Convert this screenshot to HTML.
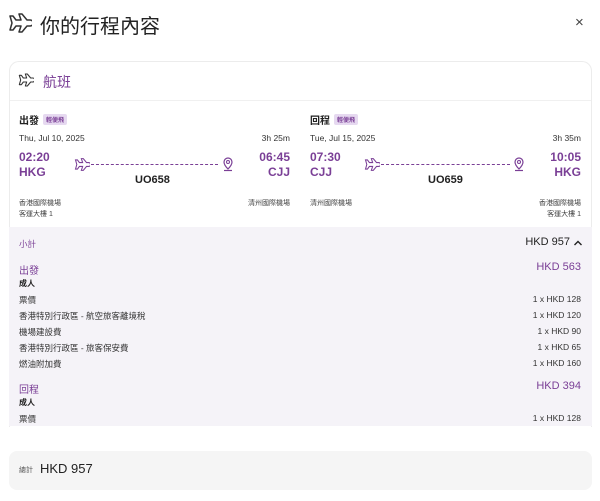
<!DOCTYPE html>
<html><head><meta charset="utf-8">
<style>
*{margin:0;padding:0;box-sizing:border-box}
body{width:600px;height:501px;background:#fff;font-family:"Liberation Sans","Noto Sans CJK TC",sans-serif;color:#222;position:relative;overflow:hidden}
.a{position:absolute;white-space:nowrap}
.p{color:#7a3f96}
.s{font-size:8.5px;color:#333}
.r{text-align:right}
.tag{display:inline-block;background:#e6d9f0;color:#7a3f96;font-size:6px;padding:1px 3px;border-radius:2px;vertical-align:2px;margin-left:4px;font-weight:bold}
.big{font-size:12px;font-weight:bold;color:#7a3f96;line-height:15px}
.dash{position:absolute;border-top:1px dashed #7a3f96;height:0}
</style></head><body>
<svg class="a" style="left:8px;top:13px" width="24" height="20" viewBox="0 0 24 20"><path d="M2 3l3 0 3 4h5l-2-6h3l5 6h3c2 0 3 1.5 3 3s-1 3-3 3h-3l-5 6h-3l2-6h-5l-3 4h-3l2-7z" fill="none" stroke="#333" stroke-width="1.5" stroke-linejoin="round"/></svg>
<div class="a" style="left:40px;top:10px;font-size:20px;color:#222">你的行程內容</div>
<div class="a" style="left:575px;top:14px;font-size:15px;color:#444">×</div>

<div class="a" style="left:9px;top:61px;width:583px;height:366px;border:1px solid #ececec;border-bottom:none;border-radius:10px 10px 0 0"></div>
<svg class="a" style="left:18px;top:73px" width="16" height="14" viewBox="0 0 24 20"><path d="M2 3l3 0 3 4h5l-2-6h3l5 6h3c2 0 3 1.5 3 3s-1 3-3 3h-3l-5 6h-3l2-6h-5l-3 4h-3l2-7z" fill="none" stroke="#333" stroke-width="1.6" stroke-linejoin="round"/></svg>
<div class="a p" style="left:43px;top:72px;font-size:14px">航班</div>
<div class="a" style="left:10px;top:100px;width:581px;border-top:1px solid #f0f0f0"></div>

<div class="a" style="left:19px;top:112px;font-size:10px;font-weight:bold">出發<span class="tag">輕便飛</span></div>
<div class="a s" style="left:19px;top:133px">Thu, Jul 10, 2025</div>
<div class="a s r" style="left:200px;width:90px;top:133px">3h 25m</div>
<div class="a big" style="left:19px;top:150px">02:20<br>HKG</div>
<div class="a big r" style="left:230px;width:60px;top:150px">06:45<br>CJJ</div>
<svg class="a" style="left:74px;top:158px" width="16" height="13" viewBox="0 0 24 20"><path d="M2 3l3 0 3 4h5l-2-6h3l5 6h3c2 0 3 1.5 3 3s-1 3-3 3h-3l-5 6h-3l2-6h-5l-3 4h-3l2-7z" fill="none" stroke="#7a3f96" stroke-width="1.6"/></svg>
<div class="dash" style="left:91px;top:164px;width:127px"></div>
<svg class="a" style="left:222px;top:157px" width="12" height="15" viewBox="0 0 12 15"><path d="M6 12C3 9 2 7 2 5a4 4 0 0 1 8 0c0 2-1 4-4 7z" fill="none" stroke="#7a3f96" stroke-width="1.2"/><circle cx="6" cy="5" r="1.5" fill="none" stroke="#7a3f96" stroke-width="1"/><path d="M2 13.5h8" stroke="#7a3f96" stroke-width="1.2"/></svg>
<div class="a" style="left:135px;top:174px;font-size:11px;font-weight:bold">UO658</div>
<div class="a" style="left:19px;top:198px;font-size:7px;color:#444;line-height:11px">香港國際機場<br>客運大樓 1</div>
<div class="a r" style="left:200px;width:90px;top:198px;font-size:7px;color:#444">清州國際機場</div>

<div class="a" style="left:310px;top:112px;font-size:10px;font-weight:bold">回程<span class="tag">輕便飛</span></div>
<div class="a s" style="left:310px;top:133px">Tue, Jul 15, 2025</div>
<div class="a s r" style="left:490px;width:91px;top:133px">3h 35m</div>
<div class="a big" style="left:310px;top:150px">07:30<br>CJJ</div>
<div class="a big r" style="left:520px;width:61px;top:150px">10:05<br>HKG</div>
<svg class="a" style="left:364px;top:158px" width="16" height="13" viewBox="0 0 24 20"><path d="M2 3l3 0 3 4h5l-2-6h3l5 6h3c2 0 3 1.5 3 3s-1 3-3 3h-3l-5 6h-3l2-6h-5l-3 4h-3l2-7z" fill="none" stroke="#7a3f96" stroke-width="1.6"/></svg>
<div class="dash" style="left:381px;top:164px;width:129px"></div>
<svg class="a" style="left:513px;top:157px" width="12" height="15" viewBox="0 0 12 15"><path d="M6 12C3 9 2 7 2 5a4 4 0 0 1 8 0c0 2-1 4-4 7z" fill="none" stroke="#7a3f96" stroke-width="1.2"/><circle cx="6" cy="5" r="1.5" fill="none" stroke="#7a3f96" stroke-width="1"/><path d="M2 13.5h8" stroke="#7a3f96" stroke-width="1.2"/></svg>
<div class="a" style="left:428px;top:174px;font-size:11px;font-weight:bold">UO659</div>
<div class="a" style="left:310px;top:198px;font-size:7px;color:#444">清州國際機場</div>
<div class="a r" style="left:480px;width:101px;top:198px;font-size:7px;color:#444;line-height:11px">香港國際機場<br>客運大樓 1</div>

<div class="a" style="left:9px;top:227px;width:583px;height:199px;background:#f5f3f8"></div>
<div class="a p" style="left:19px;top:238px;font-size:8.5px">小計</div>
<div class="a" style="left:480px;top:236px;width:90px;text-align:right;font-size:11px;color:#222">HKD 957</div>
<svg class="a" style="left:573px;top:239px" width="10" height="8" viewBox="0 0 10 8"><path d="M1.5 6L5 2.5 8.5 6" fill="none" stroke="#222" stroke-width="1.4"/></svg>

<div class="a p" style="left:19px;top:262px;font-size:10px">出發</div>
<div class="a p r" style="left:480px;width:101px;top:261px;font-size:11px">HKD 563</div>
<div class="a" style="left:19px;top:278px;font-size:8px;font-weight:bold">成人</div>
<div class="a s" style="left:19px;top:294px">票價</div><div class="a s r" style="left:480px;width:101px;top:294px">1 x HKD 128</div>
<div class="a s" style="left:19px;top:310px">香港特別行政區 - 航空旅客離境稅</div><div class="a s r" style="left:480px;width:101px;top:310px">1 x HKD 120</div>
<div class="a s" style="left:19px;top:326px">機場建設費</div><div class="a s r" style="left:480px;width:101px;top:326px">1 x HKD 90</div>
<div class="a s" style="left:19px;top:342px">香港特別行政區 - 旅客保安費</div><div class="a s r" style="left:480px;width:101px;top:342px">1 x HKD 65</div>
<div class="a s" style="left:19px;top:358px">燃油附加費</div><div class="a s r" style="left:480px;width:101px;top:358px">1 x HKD 160</div>
<div class="a p" style="left:19px;top:381px;font-size:10px">回程</div>
<div class="a p r" style="left:480px;width:101px;top:380px;font-size:11px">HKD 394</div>
<div class="a" style="left:19px;top:397px;font-size:8px;font-weight:bold">成人</div>
<div class="a s" style="left:19px;top:413px">票價</div><div class="a s r" style="left:480px;width:101px;top:413px">1 x HKD 128</div>

<div class="a" style="left:9px;top:451px;width:583px;height:39px;background:#f5f5f5;border-radius:8px"></div>
<div class="a" style="left:19px;top:465px;font-size:7px;color:#555">總計</div>
<div class="a" style="left:40px;top:461px;font-size:13px;color:#222">HKD 957</div>
</body></html>
